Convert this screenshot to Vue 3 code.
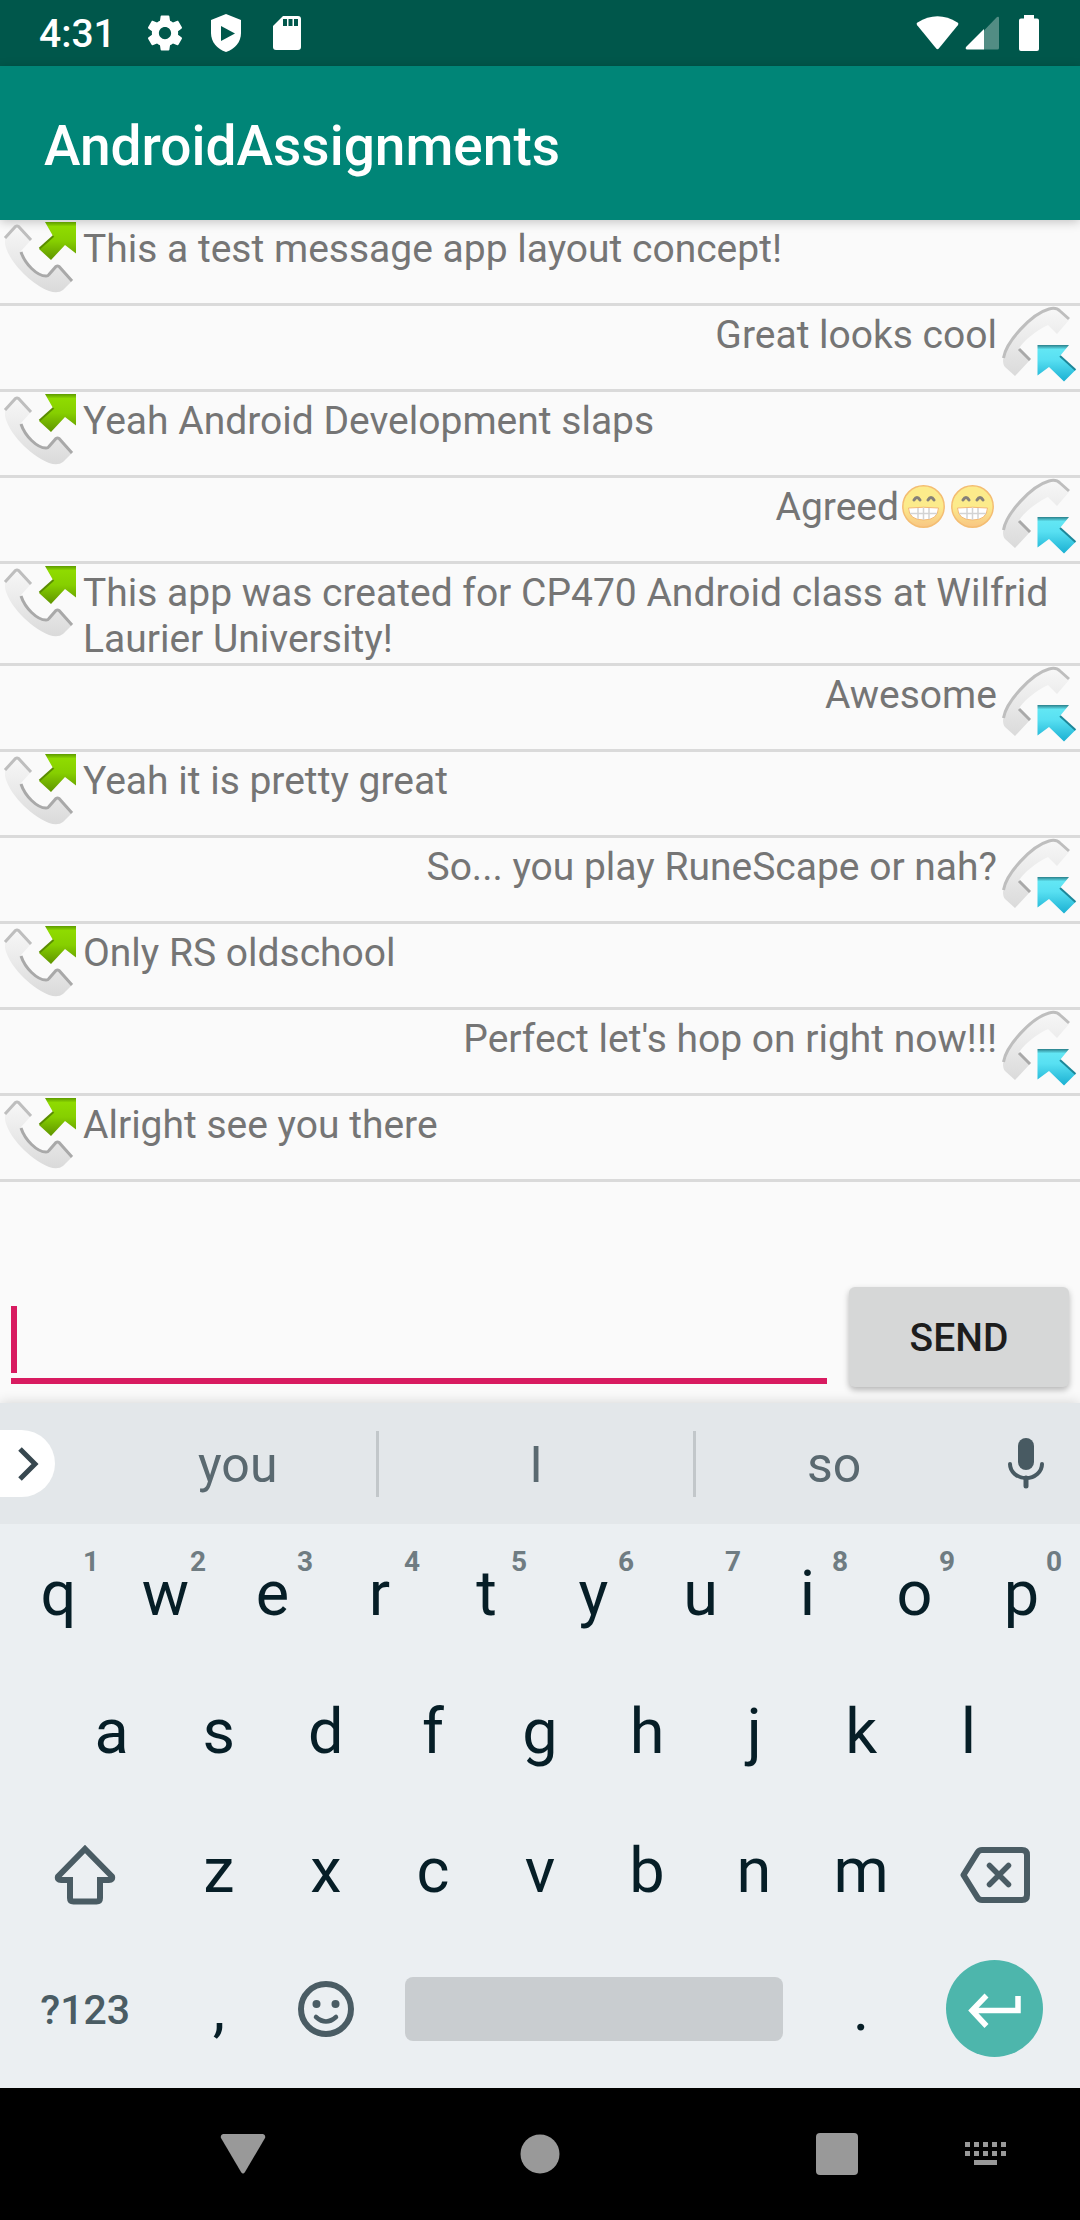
<script setup>
import { ref } from 'vue'

const draft = ref('')

const messages = [
  { text: 'This a test message app layout concept!', out: true },
  { text: 'Great looks cool', out: false },
  { text: 'Yeah Android Development slaps', out: true },
  { text: 'Agreed', out: false, grins: 2 },
  { text: 'This app was created for CP470 Android class at Wilfrid Laurier University!', out: true },
  { text: 'Awesome', out: false },
  { text: 'Yeah it is pretty great', out: true },
  { text: 'So... you play RuneScape or nah?', out: false },
  { text: 'Only RS oldschool', out: true },
  { text: "Perfect let's hop on right now!!!", out: false },
  { text: 'Alright see you there', out: true },
]

const topKeys = 'qwertyuiop'.split('').map((letter, i) => ({ letter, hint: String((i + 1) % 10) }))
const homeKeys = 'asdfghjkl'.split('')
const bottomKeys = 'zxcvbnm'.split('')
const navDots = [0, 9, 18, 27, 36]
</script>

<template>
  <div class="phone">
    <svg class="defs" aria-hidden="true">
      <defs>
        <linearGradient id="green" x1="0" y1="0" x2="0" y2="1">
          <stop offset="0" stop-color="#5d9a00" />
          <stop offset="0.12" stop-color="#8fdb00" />
          <stop offset="0.5" stop-color="#86cf00" />
          <stop offset="1" stop-color="#5f9400" />
        </linearGradient>
        <linearGradient id="cyan" x1="0" y1="0" x2="0" y2="1">
          <stop offset="0" stop-color="#2a7f8a" />
          <stop offset="0.12" stop-color="#62e6f4" />
          <stop offset="0.4" stop-color="#58e0f2" />
          <stop offset="1" stop-color="#1bb0d2" />
        </linearGradient>
        <linearGradient id="handset" x1="0" y1="0" x2="0" y2="1">
          <stop offset="0" stop-color="#f7f7f7" />
          <stop offset="0.5" stop-color="#e9e9e9" />
          <stop offset="1" stop-color="#dadada" />
        </linearGradient>
        <linearGradient id="grin" x1="0" y1="0" x2="0" y2="1">
          <stop offset="0.5" stop-color="#fceb8b" />
          <stop offset="1" stop-color="#f8c583" />
        </linearGradient>
      </defs>
    </svg>

    <div class="status">
      <span class="clock">4:31</span>
      <svg class="gear" width="42" height="42" viewBox="0 0 24 24" fill="#fff"><path d="M19.43 12.98c.04-.32.07-.64.07-.98s-.03-.66-.07-.98l2.11-1.65c.19-.15.24-.42.12-.64l-2-3.46c-.12-.22-.39-.3-.61-.22l-2.490 1c-.52-.4-1.08-.73-1.69-.98l-.38-2.65C14.46 2.18 14.25 2 14 2h-4c-.25 0-.46.18-.49.42l-.38 2.65c-.61.25-1.17.59-1.69.98l-2.490-1c-.23-.09-.49 0-.61.22l-2 3.46c-.13.22-.07.49.12.64l2.11 1.65c-.04.32-.07.65-.07.98s.03.66.07.98l-2.11 1.65c-.19.15-.24.42-.12.64l2 3.46c.12.22.39.3.61.22l2.490-1c.52.4 1.08.73 1.69.98l.38 2.65c.03.24.24.42.49.42h4c.25 0 .46-.18.49-.42l.38-2.65c.61-.25 1.17-.59 1.69-.98l2.490 1c.23.09.49 0 .61-.22l2-3.46c.12-.22.07-.49-.12-.64l-2.11-1.65zM12 15.500c-1.930 0-3.500-1.570-3.500-3.500s1.570-3.500 3.500-3.500 3.500 1.570 3.500 3.500-1.570 3.500-3.500 3.500z" /></svg>
      <svg class="shield" width="32" height="38" viewBox="0 0 32 38"><path d="M16 0 31 6v13c0 9-6 16-15 19C7 35 1 28 1 19V6z" fill="#fff" /><path d="M11 12v15l14-7.500z" fill="#00574b" /></svg>
      <svg class="card" width="28" height="34" viewBox="0 0 28 34"><path d="M10 0h15a3 3 0 0 1 3 3v28a3 3 0 0 1-3 3H3a3 3 0 0 1-3-3V10z" fill="#fff" /><path d="M10 3h4v7h-4zM15.500 3h4v7h-4zM21 3h4v7h-4z" fill="#00574b" /></svg>
      <svg class="wifi" width="43" height="34" viewBox="0 0 43 34"><path d="M1.500 6.500Q21.500-6 41.500 6.500q1.500 1 .3 2.700L22.800 32.500q-1.300 1.400-2.600 0L1.200 9.200Q0 7.500 1.500 6.500z" fill="#fff" /></svg>
      <svg class="signal" width="34" height="34" viewBox="0 0 34 34"><path d="M19 14.500 32 1q2-1 2 1v30q0 1.500-1.500 1.500H19z" fill="#fff" opacity=".32" /><path d="M19 13v20.500H2Q0 33 1 31z" fill="#fff" /></svg>
      <svg class="battery" width="20" height="36" viewBox="0 0 20 36"><path d="M5 0h10v3.500h3a2 2 0 0 1 2 2V34a2 2 0 0 1-2 2H2a2 2 0 0 1-2-2V5.500a2 2 0 0 1 2-2h3z" fill="#fff" /></svg>
    </div>

    <header class="appbar"><h1>AndroidAssignments</h1></header>

    <main>
      <ul class="chat">
        <li v-for="(m, i) in messages" :key="i" :class="{ incoming: !m.out }">
          <svg v-if="m.out" class="call" viewBox="0 0 83 83" aria-hidden="true">
            <path d="M5 18 17 6 31 20 21 31C26 44 36 56 46 56L57 45 72 61 63 70Q58 74 49 71C29 63 8 40 5 24z" fill="url(#handset)" />
            <path d="M5 18 15.500 6.500q1.500-1 3 0L31 20" class="edge soft" />
            <path d="M21 32C25 44 37 56 46 56q2 0 3-1.500l7-8q1.500-1 3 0L72 61" class="edge" />
            <path d="M45 2h31v31.500L65 25 51 40 39 29 53 16z" fill="url(#green)" />
            <path d="M53.500 16 39.500 28.500" stroke="#5a8c00" stroke-width="2" />
          </svg>
          <p>{{ m.text }}<svg v-for="g in m.grins || 0" :key="g" class="grin" viewBox="0 0 49 43" role="img" aria-label="grinning face"><circle cx="24.500" cy="21.500" r="20.700" fill="url(#grin)" stroke="#f4bd72" stroke-width="1.500" /><path d="M15 15q3-5 6 0M29 15q3-5 6 0" fill="none" stroke="#858078" stroke-width="3" stroke-linecap="round" /><path d="M9.500 23q15-1.500 30 0-.500 12-15 12t-15-12z" fill="#fff" stroke="#f3b974" stroke-width="1" /><path d="M11 28.500h27M19 23v11M24.500 22.500V35M30 23v11" stroke="#d3d3d3" stroke-width="1.500" fill="none" /></svg></p>
          <svg v-if="!m.out" class="call" viewBox="0 0 83 83" aria-hidden="true">
            <path d="M6 54C8 36 34 8 52 3q7-2 11 2l9 9L60 28 51 19C44 22 26 34 22 43L33 54 18 70 8 61Q6 59 6 54z" fill="url(#handset)" />
            <path d="M6.500 52C9 36 34 8 52 3q7-2 11 2l9 8" class="edge soft" />
            <path d="M22 43 33 54" class="edge" />
            <path d="M40.500 39H72L63 50 78.500 64 67 75.500 52 61 40.500 69.500z" fill="url(#cyan)" />
            <path d="M63 50 78.500 64" stroke="#1d8799" stroke-width="2" />
          </svg>
        </li>
      </ul>

      <form class="compose" @submit.prevent>
        <div class="field">
          <input v-model="draft" type="text" aria-label="Message" />
          <span class="caret"></span>
        </div>
        <button class="send" type="submit">SEND</button>
      </form>
    </main>

    <section class="keyboard" aria-label="Keyboard">
      <div class="strip">
        <button class="more" aria-label="Expand toolbar"><svg width="22" height="34" viewBox="0 0 22 34"><path d="M3 2 18 17 3 32" fill="none" stroke="#37474f" stroke-width="5" /></svg></button>
        <button class="word">you</button>
        <button class="word middle">I</button>
        <button class="word">so</button>
        <button class="mic" aria-label="Voice input"><svg width="36" height="51" viewBox="0 0 36 51"><rect x="10" y="0" width="16" height="32" rx="8" fill="#485a62" /><path d="M2 26a16 14 0 0 0 32 0" fill="none" stroke="#485a62" stroke-width="4" stroke-linecap="round" /><path d="M18 40v8" stroke="#485a62" stroke-width="5" stroke-linecap="round" /></svg></button>
      </div>
      <div class="keys">
        <div class="row">
          <button v-for="k in topKeys" :key="k.letter" class="key">{{ k.letter }}<span class="hint">{{ k.hint }}</span></button>
        </div>
        <div class="row home">
          <button v-for="k in homeKeys" :key="k" class="key">{{ k }}</button>
        </div>
        <div class="row">
          <button class="key wide low" aria-label="Shift"><svg width="62" height="60" viewBox="0 0 62 60"><path d="M31 4 58 31.500Q59 35 55 35H46V53q0 3.500-3.500 3.500h-23Q16 56.500 16 53V35H7Q3 35 4 31.500z" fill="none" stroke="#4a5c64" stroke-width="6" /></svg></button>
          <button v-for="k in bottomKeys" :key="k" class="key">{{ k }}</button>
          <button class="key wide low" aria-label="Delete"><svg width="70" height="56" viewBox="0 0 70 56"><path d="M22 3H62q5 0 5 5V48q0 5-5 5H22q-3 0-4.500-2.500L3.500 28 17.500 5.500Q19 3 22 3z" fill="none" stroke="#4a5c64" stroke-width="6" stroke-linejoin="round" /><path d="M29.500 18.500 48.500 37.500M48.500 18.500 29.500 37.500" stroke="#4a5c64" stroke-width="5.500" stroke-linecap="round" /></svg></button>
        </div>
        <div class="row">
          <button class="key wide symbols">?123</button>
          <button class="key">,</button>
          <button class="key" aria-label="Emoji"><svg width="56" height="56" viewBox="0 0 56 56"><circle cx="28" cy="28" r="25" fill="none" stroke="#4a5c64" stroke-width="6" /><circle cx="18.500" cy="23" r="4" fill="#4a5c64" /><circle cx="37.500" cy="23" r="4" fill="#4a5c64" /><path d="M18 36q10 9 20 0" fill="none" stroke="#4a5c64" stroke-width="4.500" stroke-linecap="round" /></svg></button>
          <button class="key space" aria-label="Space"><span></span></button>
          <button class="key">.</button>
          <button class="key wide" aria-label="Enter"><span class="enter"><svg width="54" height="36" viewBox="0 0 54 36"><path d="M50 3V17.500H5M18.500 2.500 4 17.500 18.500 33" fill="none" stroke="#fff" stroke-width="5.500" /></svg></span></button>
        </div>
      </div>
    </section>

    <nav class="navbar">
      <button class="back" aria-label="Back"><svg width="46" height="40" viewBox="0 0 46 40"><path d="M3 0H43q3 1 2 4L25 38q-2 3-4 0L1 4Q0 1 3 0z" fill="#999" /></svg></button>
      <button class="homebtn" aria-label="Home"><svg width="40" height="40"><circle cx="20" cy="20" r="19.500" fill="#999" /></svg></button>
      <button class="recent" aria-label="Recent apps"><svg width="42" height="42"><rect width="42" height="42" rx="4" fill="#999" /></svg></button>
      <button class="ime" aria-label="Switch keyboard"><svg width="42" height="24" viewBox="0 0 42 24" fill="#999"><template v-for="x in navDots" :key="x"><rect :x="x" y="0" width="5" height="5" /><rect :x="x" y="9" width="5" height="5" /></template><rect x="9" y="18" width="23" height="5" /></svg></button>
    </nav>
  </div>
</template>

<style>
body {
  margin: 0;
}
</style>

<style scoped>
* {
  box-sizing: border-box;
}
button {
  border: 0;
  padding: 0;
  background: none;
  font-family: inherit;
  color: inherit;
}
svg {
  display: block;
  flex: none;
}
.defs {
  position: absolute;
  width: 0;
  height: 0;
}
.phone {
  min-height: 100vh;
  display: flex;
  flex-direction: column;
  background: #fafafa;
  font-family: Roboto, 'Liberation Sans', sans-serif;
}
.status {
  height: 66px;
  display: flex;
  align-items: center;
  padding: 0 41px 0 39px;
  background: #00574b;
  color: #fff;
}
.clock {
  padding-top: 2px;
  font-size: 39px;
  font-weight: 500;
}
.gear {
  margin-left: 28px;
}
.shield {
  margin-left: 24px;
}
.card {
  margin-left: 31px;
}
.wifi {
  margin-left: auto;
}
.signal {
  margin-left: 6px;
}
.battery {
  margin-left: 20px;
}
.appbar {
  position: relative;
  height: 154px;
  display: flex;
  align-items: center;
  padding: 6px 44px 0;
  background: #008577;
  box-shadow: 0 2px 10px rgba(0, 0, 0, 0.22);
}
h1 {
  margin: 0;
  font-size: 55px;
  font-weight: 500;
  color: #fff;
}
main {
  flex: 1;
  display: flex;
  flex-direction: column;
}
.chat {
  margin: 0;
  padding: 0;
  list-style: none;
}
.chat li {
  min-height: 86px;
  display: flex;
  align-items: flex-start;
  border-bottom: 3px solid #dadada;
}
.chat li.incoming {
  justify-content: flex-end;
}
.call {
  position: relative;
  width: 83px;
  height: 83px;
}
.edge {
  fill: none;
  stroke: #a9a9a9;
  stroke-width: 3;
}
.soft {
  stroke: #bebebe;
}
.chat p {
  margin: 0;
  padding: 6px 0 1px;
  font-size: 39px;
  line-height: 46px;
  color: #757575;
}
.grin {
  display: inline-block;
  width: 49px;
  height: 43px;
  vertical-align: -8px;
}
.compose {
  display: flex;
  align-items: flex-end;
  gap: 22px;
  margin-top: auto;
  padding: 0 11px 16px;
}
.field {
  position: relative;
  flex: 1;
  margin-bottom: 3px;
}
.field input {
  display: block;
  width: 100%;
  height: 97px;
  padding: 0;
  border: 0;
  border-bottom: 6px solid #d81b60;
  outline: 0;
  background: none;
  font: 50px Roboto, sans-serif;
}
.caret {
  position: absolute;
  left: 0;
  bottom: 11px;
  width: 6px;
  height: 67px;
  background: #d81b60;
}
.send {
  width: 220px;
  height: 100px;
  padding-top: 2px;
  border-radius: 6px;
  background: #d6d7d7;
  box-shadow: 0 3px 6px rgba(0, 0, 0, 0.28);
  font-size: 39px;
  font-weight: 500;
  color: #1d1d1d;
}
.keyboard {
  position: relative;
  background: #ebeff2;
  box-shadow: 0 0 12px rgba(0, 0, 0, 0.16);
}
.strip {
  height: 121px;
  display: flex;
  align-items: center;
  background: #e3e7ea;
}
.more {
  width: 55px;
  height: 67px;
  margin-right: 45px;
  padding-left: 17px;
  border-radius: 0 34px 34px 0;
  background: #fff;
}
.word {
  flex: 7 1 0;
  height: 66px;
  padding-top: 3px;
  font-size: 50px;
  color: #5a6970;
}
.middle {
  flex-grow: 8;
  border: solid #c2c7ca;
  border-width: 0 3px;
}
.mic {
  display: flex;
  justify-content: center;
  width: 108px;
}
.keys {
  display: grid;
  grid-template-rows: repeat(4, 1fr);
  height: 564px;
  padding: 0 5px 10px;
}
.row {
  display: flex;
}
.home {
  padding: 0 53px;
}
.key {
  position: relative;
  flex: 2 1 0;
  min-width: 0;
  display: flex;
  align-items: center;
  justify-content: center;
  font-size: 63px;
  color: #061e27;
}
.wide {
  flex-grow: 3;
}
.low {
  padding-top: 10px;
}
.symbols {
  padding-top: 2px;
  font-size: 41px;
  font-weight: 500;
  color: #4a5c64;
}
.hint {
  position: absolute;
  top: 21px;
  right: 13px;
  font-size: 28px;
  font-weight: 700;
  color: #6f7c82;
}
.space {
  flex-grow: 8;
}
.space span {
  width: 100%;
  height: 64px;
  margin: 0 25px;
  border-radius: 8px;
  background: #c9cdd0;
}
.enter {
  display: flex;
  align-items: center;
  justify-content: center;
  width: 97px;
  height: 97px;
  padding-top: 4px;
  border-radius: 50%;
  background: #4db6ac;
}
.navbar {
  height: 132px;
  display: grid;
  grid-template-columns: 94fr 297fr 297fr 74fr 149fr 149fr 20fr;
  background: #000;
}
.navbar button {
  display: flex;
  align-items: center;
  justify-content: center;
}
.back {
  grid-column: 2;
}
.homebtn {
  grid-column: 3;
}
.recent {
  grid-column: 5;
}
.ime {
  grid-column: 6;
}
</style>
